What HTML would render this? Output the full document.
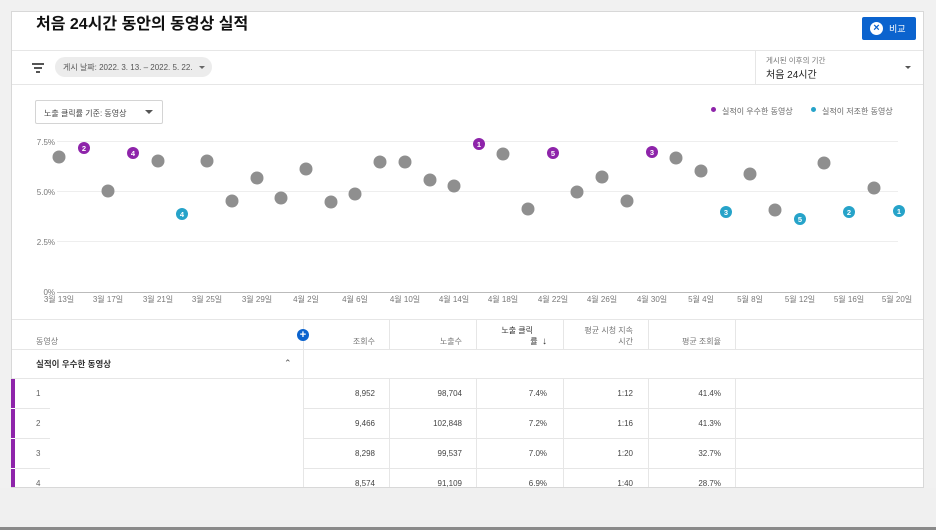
<!DOCTYPE html>
<html><head><meta charset="utf-8"><style>
*{margin:0;padding:0;box-sizing:border-box}
body{width:936px;height:530px;background:#f1f1f1;font-family:"Liberation Sans","Noto Sans CJK KR",sans-serif;position:relative;overflow:hidden;color:#222}
.card{position:absolute;left:11px;top:11px;width:913px;height:477px;background:#fff;border:1px solid #d8d8d8}
.a{position:absolute}
.hl{position:absolute;height:1px;background:#e6e6e6}
.vl{position:absolute;width:1px;background:#e6e6e6}
.t{font-size:8px;color:#606060}
.num{position:absolute;font-size:8px;color:#444;text-align:right}
</style></head><body>
<div class="card"></div>
<div class="a" style="left:36px;top:10px;font-size:16px;font-weight:bold;color:#111">처음 24시간 동안의 동영상 실적</div>
<div class="a" style="left:862px;top:17px;width:54px;height:23px;background:#0b63ce;border-radius:2px"></div>
<div class="a" style="left:870px;top:22px;width:13px;height:13px;border-radius:50%;background:#fff;color:#0b63ce;font-size:11px;line-height:13px;text-align:center;font-weight:bold">×</div>
<div class="a" style="left:889px;top:22px;font-size:9px;color:#fff">비교</div>
<div class="hl" style="left:12px;top:50px;width:911px"></div>
<div class="hl" style="left:12px;top:84px;width:911px"></div>
<div class="vl" style="left:755px;top:51px;height:33px"></div>
<div class="a" style="left:32px;top:63px;width:12px;height:1.5px;background:#555"></div>
<div class="a" style="left:34px;top:67px;width:8px;height:1.5px;background:#555"></div>
<div class="a" style="left:36px;top:71px;width:4px;height:1.5px;background:#555"></div>
<div class="a" style="left:55px;top:57px;width:157px;height:20px;border-radius:10px;background:#ececec"></div>
<div class="a t" style="left:63px;top:62px;color:#555">게시 날짜: 2022. 3. 13. – 2022. 5. 22.</div>
<div class="a" style="left:199px;top:66px;border:3px solid transparent;border-top:3px solid #666"></div>
<div class="a" style="left:766px;top:55px;font-size:7.5px;color:#777">게시된 이후의 기간</div>
<div class="a" style="left:766px;top:66px;font-size:10px;color:#222">처음 24시간</div>
<div class="a" style="left:905px;top:66px;border:3.5px solid transparent;border-top:3.5px solid #555"></div>
<div class="a" style="left:35px;top:100px;width:128px;height:24px;border:1px solid #d4d4d4;border-radius:2px"></div>
<div class="a t" style="left:44px;top:108px;color:#444">노출 클릭률 기준: 동영상</div>
<div class="a" style="left:145px;top:110px;border:4px solid transparent;border-top:4px solid #555"></div>
<div class="a" style="left:711px;top:107px;width:5px;height:5px;border-radius:50%;background:#8e24aa"></div>
<div class="a t" style="left:722px;top:106px;color:#666">실적이 우수한 동영상</div>
<div class="a" style="left:811px;top:107px;width:5px;height:5px;border-radius:50%;background:#26a3c9"></div>
<div class="a t" style="left:822px;top:106px;color:#666">실적이 저조한 동영상</div>
<svg class="a" style="left:0;top:0" width="936" height="320" font-family="Liberation Sans,sans-serif">
<g stroke="#eeeeee" stroke-width="1"><line x1="57" y1="141.5" x2="898" y2="141.5"/><line x1="57" y1="191.5" x2="898" y2="191.5"/><line x1="57" y1="241.5" x2="898" y2="241.5"/></g>
<line x1="57" y1="292.5" x2="898" y2="292.5" stroke="#bbb"/>
<g font-size="8" fill="#777" text-anchor="end"><text x="55" y="145">7.5%</text><text x="55" y="195">5.0%</text><text x="55" y="245">2.5%</text><text x="55" y="295">0%</text></g>
<g font-size="8" fill="#777" text-anchor="middle" font-family="Liberation Sans,Noto Sans CJK KR,sans-serif">
<text x="59" y="302">3월 13일</text><text x="108" y="302">3월 17일</text><text x="158" y="302">3월 21일</text><text x="207" y="302">3월 25일</text><text x="257" y="302">3월 29일</text><text x="306" y="302">4월 2일</text><text x="355" y="302">4월 6일</text><text x="405" y="302">4월 10일</text><text x="454" y="302">4월 14일</text><text x="503" y="302">4월 18일</text><text x="553" y="302">4월 22일</text><text x="602" y="302">4월 26일</text><text x="652" y="302">4월 30일</text><text x="701" y="302">5월 4일</text><text x="750" y="302">5월 8일</text><text x="800" y="302">5월 12일</text><text x="849" y="302">5월 16일</text><text x="897" y="302">5월 20일</text></g>
<g fill="#8f8f8f">
<circle cx="59" cy="157" r="6.5"/><circle cx="108" cy="191" r="6.5"/><circle cx="158" cy="161" r="6.5"/><circle cx="207" cy="161" r="6.5"/><circle cx="232" cy="201" r="6.5"/><circle cx="257" cy="178" r="6.5"/><circle cx="281" cy="198" r="6.5"/><circle cx="306" cy="169" r="6.5"/><circle cx="331" cy="202" r="6.5"/><circle cx="355" cy="194" r="6.5"/><circle cx="380" cy="162" r="6.5"/><circle cx="405" cy="162" r="6.5"/><circle cx="430" cy="180" r="6.5"/><circle cx="454" cy="186" r="6.5"/><circle cx="503" cy="154" r="6.5"/><circle cx="528" cy="209" r="6.5"/><circle cx="577" cy="192" r="6.5"/><circle cx="602" cy="177" r="6.5"/><circle cx="627" cy="201" r="6.5"/><circle cx="676" cy="158" r="6.5"/><circle cx="701" cy="171" r="6.5"/><circle cx="750" cy="174" r="6.5"/><circle cx="775" cy="210" r="6.5"/><circle cx="824" cy="163" r="6.5"/><circle cx="874" cy="188" r="6.5"/></g>
<g fill="#8e24aa"><circle cx="84" cy="148" r="6"/><circle cx="133" cy="153" r="6"/><circle cx="479" cy="144" r="6"/><circle cx="553" cy="153" r="6"/><circle cx="652" cy="152" r="6"/></g>
<g fill="#26a3c9"><circle cx="182" cy="214" r="6"/><circle cx="726" cy="212" r="6"/><circle cx="800" cy="219" r="6"/><circle cx="849" cy="212" r="6"/><circle cx="899" cy="211" r="6"/></g>
<g fill="#fff" font-size="7.5" font-weight="bold" text-anchor="middle">
<text x="84" y="151">2</text><text x="133" y="156">4</text><text x="479" y="147">1</text><text x="553" y="156">5</text><text x="652" y="155">3</text>
<text x="182" y="217">4</text><text x="726" y="215">3</text><text x="800" y="222">5</text><text x="849" y="215">2</text><text x="899" y="214">1</text></g>
</svg>
<div class="hl" style="left:12px;top:319px;width:911px"></div>
<div class="hl" style="left:12px;top:349px;width:911px"></div>
<div class="hl" style="left:303px;top:378px;width:620px"></div>
<div class="hl" style="left:303px;top:408px;width:620px"></div>
<div class="hl" style="left:303px;top:438px;width:620px"></div>
<div class="hl" style="left:303px;top:468px;width:620px"></div>
<div class="hl" style="left:12px;top:378px;width:291px"></div>
<div class="hl" style="left:12px;top:408px;width:38px"></div>
<div class="hl" style="left:12px;top:438px;width:38px"></div>
<div class="hl" style="left:12px;top:468px;width:38px"></div>
<div class="vl" style="left:303px;top:320px;height:167px"></div>
<div class="vl" style="left:389px;top:320px;height:30px"></div>
<div class="vl" style="left:476px;top:320px;height:30px"></div>
<div class="vl" style="left:563px;top:320px;height:30px"></div>
<div class="vl" style="left:648px;top:320px;height:30px"></div>
<div class="vl" style="left:735px;top:320px;height:30px"></div>
<div class="vl" style="left:389px;top:378px;height:109px"></div>
<div class="vl" style="left:476px;top:378px;height:109px"></div>
<div class="vl" style="left:563px;top:378px;height:109px"></div>
<div class="vl" style="left:648px;top:378px;height:109px"></div>
<div class="vl" style="left:735px;top:378px;height:109px"></div>
<div class="a" style="left:297px;top:329px;width:12px;height:12px;border-radius:50%;background:#0b63ce;color:#fff;font-size:11px;line-height:12px;text-align:center;font-weight:bold">+</div>
<div class="a t" style="left:36px;top:336px;color:#777">동영상</div>
<div class="num" style="left:310px;width:65px;top:336px;color:#777">조회수</div>
<div class="num" style="left:395px;width:67px;top:336px;color:#777">노출수</div>
<div class="num" style="left:480px;width:53px;top:325px;color:#333">노출 클릭</div>
<div class="num" style="left:480px;width:67px;top:336px;color:#333">률 &nbsp;<b style="font-size:10px">↓</b></div>
<div class="num" style="left:565px;width:68px;top:325px;color:#777">평균 시청 지속</div>
<div class="num" style="left:565px;width:68px;top:336px;color:#777">시간</div>
<div class="num" style="left:650px;width:71px;top:336px;color:#777">평균 조회율</div>
<div class="a" style="left:36px;top:358px;font-size:8.5px;font-weight:bold;color:#333">실적이 우수한 동영상</div>
<div class="a" style="left:284px;top:358px;font-size:9px;color:#555">⌃</div>
<div class="a" style="left:11px;top:379px;width:4px;height:108px;background:#8e24aa"></div>
<div class="a" style="left:11px;top:408px;width:4px;height:1px;background:#fff"></div>
<div class="a" style="left:11px;top:438px;width:4px;height:1px;background:#fff"></div>
<div class="a" style="left:11px;top:468px;width:4px;height:1px;background:#fff"></div>
<div class="a t" style="left:36px;top:389px">1</div><div class="a t" style="left:36px;top:419px">2</div><div class="a t" style="left:36px;top:449px">3</div><div class="a t" style="left:36px;top:479px">4</div>
<div class="num" style="left:310px;width:65px;top:389px">8,952</div><div class="num" style="left:395px;width:67px;top:389px">98,704</div><div class="num" style="left:480px;width:67px;top:389px">7.4%</div><div class="num" style="left:565px;width:68px;top:389px">1:12</div><div class="num" style="left:650px;width:71px;top:389px">41.4%</div>
<div class="num" style="left:310px;width:65px;top:419px">9,466</div><div class="num" style="left:395px;width:67px;top:419px">102,848</div><div class="num" style="left:480px;width:67px;top:419px">7.2%</div><div class="num" style="left:565px;width:68px;top:419px">1:16</div><div class="num" style="left:650px;width:71px;top:419px">41.3%</div>
<div class="num" style="left:310px;width:65px;top:449px">8,298</div><div class="num" style="left:395px;width:67px;top:449px">99,537</div><div class="num" style="left:480px;width:67px;top:449px">7.0%</div><div class="num" style="left:565px;width:68px;top:449px">1:20</div><div class="num" style="left:650px;width:71px;top:449px">32.7%</div>
<div class="num" style="left:310px;width:65px;top:479px">8,574</div><div class="num" style="left:395px;width:67px;top:479px">91,109</div><div class="num" style="left:480px;width:67px;top:479px">6.9%</div><div class="num" style="left:565px;width:68px;top:479px">1:40</div><div class="num" style="left:650px;width:71px;top:479px">28.7%</div>
<div class="a" style="left:0;top:488px;width:936px;height:42px;background:#f0f0f0"></div>
<div class="a" style="left:0;top:527px;width:936px;height:3px;background:#8a8a8a"></div>
</body></html>
